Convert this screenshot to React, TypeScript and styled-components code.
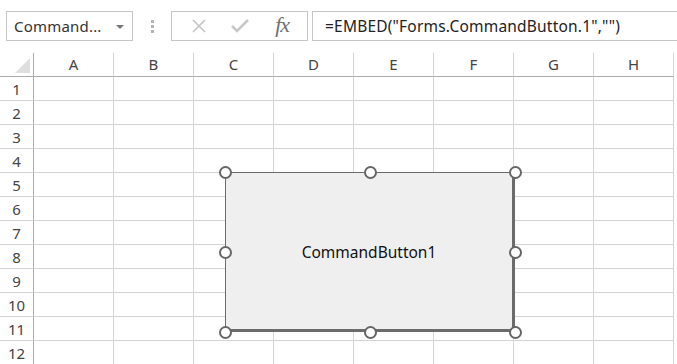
import React from 'react';
import styled, { createGlobalStyle } from 'styled-components';

const GlobalStyle = createGlobalStyle`
  html, body {
    margin: 0;
    padding: 0;
    background: #ffffff;
    overflow: hidden;
  }
  body {
    font-family: 'Noto Sans', 'Open Sans', sans-serif;
  }
`;

const COLUMNS = ['A', 'B', 'C', 'D', 'E', 'F', 'G', 'H'];
const ROWS = [1, 2, 3, 4, 5, 6, 7, 8, 9, 10, 11, 12];

const HEADER_W = 34;
const COL_W = 80;
const HEADER_H = 24;
const ROW_H = 24;

/* Page */
const Page = styled.div`
  width: 677px;
  height: 364px;
  overflow: hidden;
  background: #fff;
  color: #333;
`;

/* FormulaBar */
const FormulaBar = styled.div`
  display: flex;
  align-items: center;
  padding: 11px 0 0 6px;
  height: 30px;
`;

const NameBox = styled.div`
  box-sizing: border-box;
  width: 127px;
  height: 30px;
  border: 1px solid #c6c6c6;
  display: flex;
  align-items: center;
  padding: 0 8px 0 7px;
  font-size: 15px;
  letter-spacing: 0.2px;
  color: #333;
`;

const NameText = styled.span`
  flex: 1;
`;

const DropArrow = styled.span`
  width: 0;
  height: 0;
  border-left: 4px solid transparent;
  border-right: 4px solid transparent;
  border-top: 4px solid #777;
  margin-top: 1px;
`;

const Grip = styled.div`
  width: 38px;
  display: flex;
  flex-direction: column;
  align-items: center;
  gap: 2px;
`;

const GripDot = styled.span`
  width: 3px;
  height: 3px;
  background: #b4b4b4;
`;

const FuncBox = styled.div`
  box-sizing: border-box;
  width: 137px;
  height: 30px;
  border: 1px solid #c6c6c6;
  display: flex;
  align-items: center;
  justify-content: space-around;
  padding: 0 4px 0 6px;
`;

const FuncIcon = styled.span`
  display: flex;
  align-items: center;
  justify-content: center;
  width: 24px;
  height: 20px;
`;

const FxText = styled.span`
  font-family: 'Liberation Serif', 'DejaVu Serif', serif;
  font-style: italic;
  font-size: 22px;
  color: #6f6f6f;
  letter-spacing: -1px;
  margin-top: -3px;
`;

const FormulaInput = styled.div`
  box-sizing: border-box;
  flex: 1;
  height: 30px;
  margin-left: 4px;
  margin-right: -4px;
  border: 1px solid #c6c6c6;
  display: flex;
  align-items: center;
  padding-left: 12px;
  font-size: 15.5px;
  letter-spacing: 0.2px;
  color: #222;
  white-space: nowrap;
`;

/* Sheet */
const Sheet = styled.div`
  position: relative;
  margin-top: 12px;
  display: grid;
  grid-template-columns: ${HEADER_W}px repeat(${COLUMNS.length}, ${COL_W}px);
  grid-template-rows: ${HEADER_H}px repeat(${ROWS.length}, ${ROW_H}px);
`;

const Corner = styled.div`
  box-sizing: border-box;
  position: relative;
  border-right: 1px solid #ababab;
  border-bottom: 1px solid #ababab;
`;

const CornerTriangle = styled.span`
  position: absolute;
  right: 3px;
  bottom: 3px;
  width: 0;
  height: 0;
  border-left: 15px solid transparent;
  border-bottom: 15px solid #dfdfdf;
`;

const ColHeader = styled.div`
  box-sizing: border-box;
  border-right: 1px solid #d4d4d4;
  border-bottom: 1px solid #ababab;
  display: flex;
  align-items: center;
  justify-content: center;
  font-size: 15px;
  color: #444;
  padding-bottom: 1px;
`;

const RowHeader = styled.div`
  box-sizing: border-box;
  border-right: 1px solid #ababab;
  border-bottom: 1px solid #d4d4d4;
  display: flex;
  align-items: center;
  justify-content: center;
  font-size: 15px;
  color: #444;
`;

const Cell = styled.div`
  box-sizing: border-box;
  border-right: 1px solid #d4d4d4;
  border-bottom: 1px solid #d4d4d4;
`;

/* CommandButton (embedded control, floats over the grid) */
const ButtonFrame = styled.div`
  position: absolute;
  left: 225px;
  top: 119px;
  width: 290px;
  height: 160px;
`;

const ButtonFace = styled.div`
  box-sizing: border-box;
  width: 100%;
  height: 100%;
  background: #efefef;
  border-top: 1px solid #6b6b6b;
  border-left: 1px solid #6b6b6b;
  border-right: 3px solid #6b6b6b;
  border-bottom: 3px solid #6b6b6b;
  display: flex;
  align-items: center;
  justify-content: center;
  font-size: 15.5px;
  color: #111;
  padding-top: 2px;
`;

const Handle = styled.span<{ $x: number; $y: number }>`
  position: absolute;
  left: ${(p) => p.$x}%;
  top: ${(p) => p.$y}%;
  width: 13px;
  height: 13px;
  margin: -6px 0 0 -6px;
  box-sizing: border-box;
  border-radius: 50%;
  border: 2px solid #666;
  background: #fff;
`;

const HANDLES: [number, number][] = [
  [0, 0], [50, 0], [100, 0],
  [0, 50], [100, 50],
  [0, 100], [50, 100], [100, 100],
];

const CrossIcon = () => (
  <svg width="16" height="16" viewBox="0 0 16 16">
    <path d="M2 2 L14 14 M14 2 L2 14" stroke="#c3c3c3" strokeWidth="1.6" fill="none" />
  </svg>
);

const CheckIcon = () => (
  <svg width="18" height="14" viewBox="0 0 18 14">
    <path d="M1 7 L6 12 L17 1" stroke="#c8c8c8" strokeWidth="2.6" fill="none" />
  </svg>
);

export default function App() {
  return (
    <Page>
      <GlobalStyle />
      <FormulaBar>
        <NameBox>
          <NameText>Command...</NameText>
          <DropArrow />
        </NameBox>
        <Grip>
          <GripDot />
          <GripDot />
          <GripDot />
        </Grip>
        <FuncBox>
          <FuncIcon>
            <CrossIcon />
          </FuncIcon>
          <FuncIcon>
            <CheckIcon />
          </FuncIcon>
          <FuncIcon>
            <FxText>fx</FxText>
          </FuncIcon>
        </FuncBox>
        <FormulaInput>=EMBED("Forms.CommandButton.1","")</FormulaInput>
      </FormulaBar>

      <Sheet>
        <Corner>
          <CornerTriangle />
        </Corner>
        {COLUMNS.map((c) => (
          <ColHeader key={c}>{c}</ColHeader>
        ))}
        {ROWS.map((r) => (
          <React.Fragment key={r}>
            <RowHeader>{r}</RowHeader>
            {COLUMNS.map((c) => (
              <Cell key={c} />
            ))}
          </React.Fragment>
        ))}

        <ButtonFrame>
          <ButtonFace>CommandButton1</ButtonFace>
          {HANDLES.map(([x, y]) => (
            <Handle key={`${x}-${y}`} $x={x} $y={y} />
          ))}
        </ButtonFrame>
      </Sheet>
    </Page>
  );
}
